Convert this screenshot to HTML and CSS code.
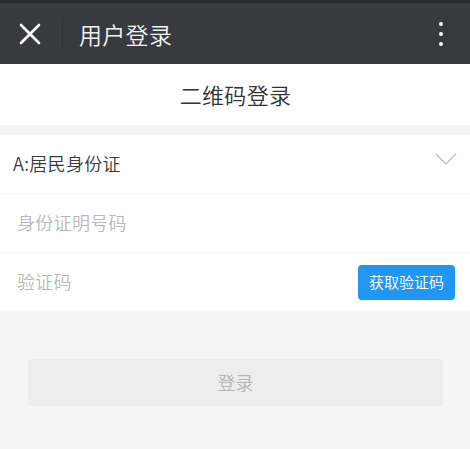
FILE: index.html
```
<!DOCTYPE html>
<html lang="zh-CN">
<head>
<meta charset="utf-8">
<title>用户登录</title>
<link rel="stylesheet" href="styles.css">
</head>
<body>
<header class="topbar">
  <div class="close">
    <svg width="22" height="22" viewBox="0 0 22 22"><path d="M2 2 L20 20 M20 2 L2 20" stroke="#fff" stroke-width="2.6" stroke-linecap="round"/></svg>
  </div>
  <div class="divider"></div>
  <div class="title">用户登录</div>
  <div class="menu">
    <span class="dot"></span><span class="dot"></span><span class="dot"></span>
  </div>
</header>
<div class="subhead">二维码登录</div>
<div class="form">
  <div class="row">
    <span class="value">A:居民身份证</span>
    <svg class="chev" width="22" height="12" viewBox="0 0 22 12"><path d="M1 1 L11 11 L21 1" fill="none" stroke="#c4c4c4" stroke-width="1.5"/></svg>
  </div>
  <div class="row">
    <span class="placeholder">身份证明号码</span>
  </div>
  <div class="row last">
    <span class="placeholder">验证码</span>
    <button class="code-btn">获取验证码</button>
  </div>
</div>
<div class="actions">
  <button class="login-btn">登录</button>
</div>
</body>
</html>
```
FILE: styles.css
```
* { box-sizing: border-box; }
html, body {
  margin: 0;
  padding: 0;
}
body {
  background: #f4f4f4;
  font-family: "Noto Sans CJK SC", "Noto Sans", "Liberation Sans", sans-serif;
  font-weight: 350;
  width: 470px;
  height: 449px;
  overflow: hidden;
}
.topbar {
  height: 64px;
  background: #393a3f;
  border-top: 3px solid #2a2b2f;
  display: flex;
  align-items: center;
  position: relative;
}
.close {
  width: 22px;
  height: 22px;
  margin-left: 19px;
  margin-top: 1px;
  display: flex;
}
.divider {
  width: 1px;
  height: 32px;
  background: #2f3034;
  margin-left: 21px;
}
.title {
  margin-left: 16px;
  color: #f2f2f2;
  font-size: 23px;
  line-height: 30px;
  letter-spacing: 0.3px;
}
.menu {
  margin-left: auto;
  margin-right: 27px;
  display: flex;
  flex-direction: column;
  gap: 6px;
  margin-top: 1px;
}
.dot {
  width: 4px;
  height: 4px;
  border-radius: 50%;
  background: #fff;
}
.subhead {
  height: 61px;
  background: #fff;
  color: #333;
  font-size: 22px;
  display: flex;
  align-items: center;
  justify-content: center;
  padding-left: 1px;
  padding-bottom: 2px;
  margin-bottom: 10px;
  letter-spacing: 0.3px;
}
.form {
  background: #fff;
}
.row {
  height: 59px;
  display: flex;
  align-items: center;
  border-bottom: 1px solid #f6f6f6;
  padding: 0 15px 0 17px;
}
.row > span {
  padding-bottom: 3px;
  letter-spacing: 0.3px;
}
.row.last {
  height: 58px;
  border-bottom: none;
}
.row:first-child { padding-left: 13px; }
.value {
  color: #3a3a3a;
  font-size: 18px;
}
.placeholder {
  color: #b8b8b8;
  font-size: 18px;
}
.chev {
  margin-left: auto;
  margin-top: -10px;
  margin-right: -2px;
}
.code-btn {
  margin-left: auto;
  width: 97px;
  height: 35px;
  border: none;
  border-radius: 4px;
  background: #2196f3;
  color: #fff;
  font-family: inherit;
  font-weight: 350;
  font-size: 15px;
  padding: 0 0 1px;
  margin-right: 0;
}
.actions {
  padding: 48px 27px 0 28px;
}
.login-btn {
  width: 100%;
  height: 47px;
  border: none;
  background: #ededed;
  color: #b3b3b3;
  font-family: inherit;
  font-weight: 350;
  font-size: 18px;
  border-radius: 2px;
  padding: 0 0 2px;
}
```
